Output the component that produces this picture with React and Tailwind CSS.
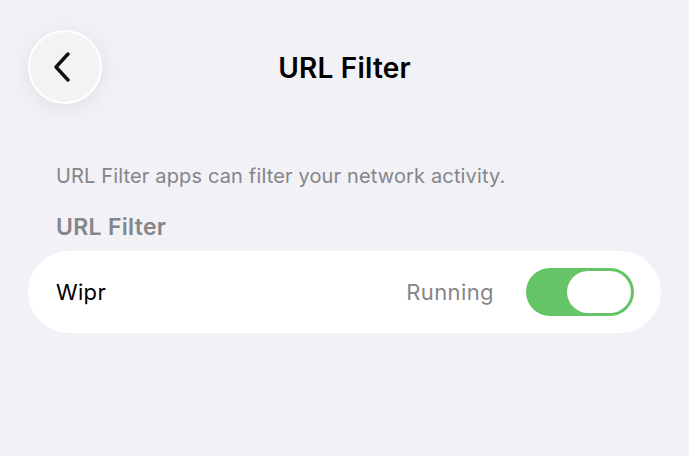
export default function App() {
  return (
    <div
      className="w-[689px] h-[456px] overflow-hidden bg-[#f1f1f6] text-black"
      style={{ fontFamily: "Inter, 'Noto Sans', sans-serif" }}
    >
      <div className="grid grid-cols-[74px_1fr_74px] items-center px-[28px] pt-[30px]">
        <button className="flex h-[74px] w-[74px] items-center justify-center rounded-full border-2 border-white bg-[#f3f3f5] shadow-[0_4px_24px_rgba(0,0,0,0.08)]">
          <svg width="20" height="30" viewBox="0 0 20 30" fill="none" className="-ml-[4px]">
            <path d="M15 2 L3 15 L15 28" stroke="#111" strokeWidth="3.4" strokeLinecap="round" strokeLinejoin="round" />
          </svg>
        </button>
        <h1 className="pt-[2px] text-center text-[28px] font-semibold tracking-[0.2px]">URL Filter</h1>
        <div />
      </div>

      <p className="mt-[60px] px-[56px] text-[20px] leading-[24px] tracking-[0.15px] text-[#85858a]">
        URL Filter apps can filter your network activity.
      </p>
      <h2 className="mt-[25px] px-[56px] text-[23px] font-semibold leading-[28px] tracking-[0.3px] text-[#85858a]">
        URL Filter
      </h2>

      <div className="mx-[28px] mt-[10px] flex h-[82px] items-center rounded-full bg-white pl-[28px] pr-[27px]">
        <span className="text-[22px] tracking-[0.3px]">Wipr</span>
        <span className="ml-auto mr-[32px] text-[22px] tracking-[0.4px] text-[#85858a]">Running</span>
        <div className="flex h-[48px] w-[108px] items-center justify-end rounded-full bg-[#65c466] p-[3px]">
          <div className="h-[42px] w-[64px] rounded-full bg-white" />
        </div>
      </div>
    </div>
  );
}
